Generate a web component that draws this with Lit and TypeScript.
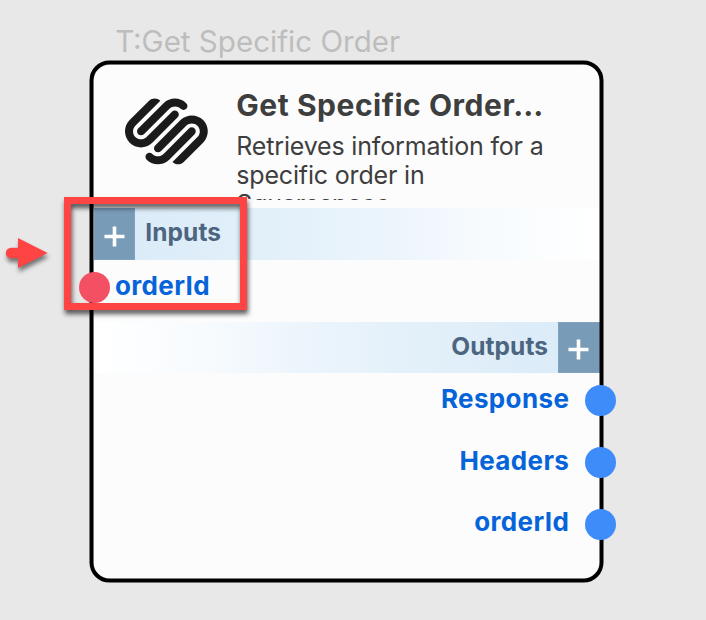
import { LitElement, html, css, svg } from "lit";
import { customElement, property } from "lit/decorators.js";

@customElement("node-section")
class NodeSection extends LitElement {
  @property() label = "";
  @property({ reflect: true }) side = "left";

  static styles = css`
    :host { display: flex; height: 51.5px; background: linear-gradient(to right, #d9eaf8, #e2f0f9 35%, #edf5fc 60%, #f7fbfe 78%, #fff); }
    :host([side="right"]) { flex-direction: row-reverse; background: linear-gradient(to left, #d9eaf8, #e2f0f9 35%, #edf5fc 60%, #f7fbfe 78%, #fff); }
    .add { box-sizing: border-box; width: 41.5px; background: #789bb7; border: 1px solid #7ea3c2; display: flex; align-items: center; justify-content: center; }
    .add svg { width: 21px; height: 21px; margin-top: 4px; }
    .label { font-size: 24.5px; line-height: 30px; font-weight: 700; letter-spacing: 0.1px; color: #4c6580; padding: 9px 10px 0; }
  `;

  render() {
    return html`
      <div class="add"><svg viewBox="0 0 21 21"><path d="M10.5 .5v20M.5 10.5h20" stroke="#fff" stroke-width="3.6" /></svg></div>
      <div class="label">${this.label}</div>
    `;
  }
}

@customElement("node-port")
class NodePort extends LitElement {
  @property() label = "";
  @property({ reflect: true }) side = "left";

  static styles = css`
    :host { display: flex; position: relative; z-index: 1; height: 61.7px; gap: 5px; margin-left: -14.8px; }
    :host([side="right"]) { flex-direction: row-reverse; gap: 15.6px; margin: 0 -16.2px 0 0; }
    .dot { flex: none; width: 31px; height: 31px; margin-top: 12.2px; border-radius: 50%; background: #f45064; }
    :host([side="right"]) .dot { background: #3e8bfa; }
    .label { font-size: 26px; line-height: 32px; font-weight: 700; letter-spacing: 0.37px; color: #0664da; margin-top: 9.8px; }
  `;

  render() {
    return html`<div class="dot"></div><div class="label">${this.label}</div>`;
  }
}

@customElement("app-root")
class AppRoot extends LitElement {
  static styles = css`
    :host { display: block; position: relative; box-sizing: border-box; width: 706px; height: 620px; overflow: hidden; background: #e8e8e8; padding: 24px 0 0 89.7px; font-family: Inter, sans-serif; white-space: nowrap; }
    .caption { height: 36.7px; padding-left: 25.5px; font-size: 29.55px; line-height: 35px; color: #bdbdbd; }
    .card { position: relative; box-sizing: border-box; width: 514px; height: 522.3px; border: 4px solid transparent; border-radius: 20px; background: #fcfcfc padding-box; }
    .card::after { content: ""; position: absolute; inset: -4px; border: 4px solid #000; border-radius: 20px; transform: translate(-0.5px, -0.5px); pointer-events: none; }
    .head { display: flex; height: 143.8px; }
    .logo { flex: none; width: 82.8px; height: 82.8px; margin: 25.2px 28px 0 31.8px; fill: #1b1b1b; }
    .info { width: 330px; height: 135.8px; overflow: hidden; }
    .name { font-size: 30px; line-height: 38px; margin-top: 21px; font-weight: 700; letter-spacing: 0.53px; color: #3e3e3e; }
    .desc { font-size: 25px; line-height: 29px; margin-top: 8px; letter-spacing: -0.17px; color: #3e3e3e; white-space: pre-line; }
    .frame { position: absolute; z-index: 2; left: 64px; top: 197px; width: 169px; height: 99px; border: 7px solid #ff4444; filter: drop-shadow(1px 4px 2.5px rgba(0,0,0,.65)); }
    .arrow { position: absolute; left: 0; top: 230px; width: 60px; height: 50px; overflow: visible; filter: drop-shadow(1px 4px 2px rgba(0,0,0,.5)); }
  `;

  render() {
    return html`
      <div class="caption">T:Get Specific Order</div>
      <div class="card">
        <div class="head">
          <svg class="logo" viewBox="0 0 24 24">${svg`<path d="M22.655 8.719c-1.802-1.801-4.726-1.801-6.564 0l-7.351 7.35c-.45.45-.45 1.2 0 1.65.45.449 1.2.449 1.65 0l7.351-7.351c.899-.899 2.362-.899 3.264 0 .9.9.9 2.364 0 3.264l-7.239 7.239c.9.899 2.362.899 3.263 0l5.589-5.589c1.836-1.838 1.836-4.763.037-6.563zm-2.475 2.437c-.451-.45-1.201-.45-1.65 0l-7.354 7.389c-.9.899-2.361.899-3.262 0-.45-.45-1.2-.45-1.65 0-.451.45-.451 1.2 0 1.649 1.801 1.801 4.726 1.801 6.564 0l7.351-7.35c.449-.487.449-1.239.001-1.688zm-2.439-7.35c-1.801-1.801-4.726-1.801-6.564 0l-7.351 7.351c-.45.449-.45 1.199 0 1.649s1.2.45 1.65 0l7.395-7.351c.9-.899 2.371-.899 3.27 0 .451.45 1.201.45 1.65 0 .421-.487.421-1.199-.05-1.649zm-2.475 2.475c-.45-.449-1.2-.449-1.65 0l-7.351 7.351c-.899.9-2.362.9-3.263 0-.9-.9-.9-2.363 0-3.264l7.239-7.239c-.9-.9-2.362-.9-3.263 0L1.35 8.719c-1.8 1.8-1.8 4.725 0 6.563 1.801 1.801 4.725 1.801 6.564 0l7.35-7.351c.451-.488.451-1.238 0-1.65z"/>`}</svg>
          <div class="info">
            <div class="name">Get Specific Order…</div>
            <div class="desc">Retrieves information for a
              specific order in
              Squarespace</div>
          </div>
        </div>
        <node-section label="Inputs"></node-section>
        <node-port label="orderId"></node-port>
        <node-section label="Outputs" side="right"></node-section>
        <node-port label="Response" side="right"></node-port>
        <node-port label="Headers" side="right"></node-port>
        <node-port label="orderId" side="right"></node-port>
      </div>
      <div class="frame"></div>
      <svg class="arrow" viewBox="0 0 60 50"><path d="M18 8 47.7 23 18 38V28.2H11a5.2 5.2 0 0 1 0-10.4h7z" fill="#ff4444"/></svg>
    `;
  }
}
